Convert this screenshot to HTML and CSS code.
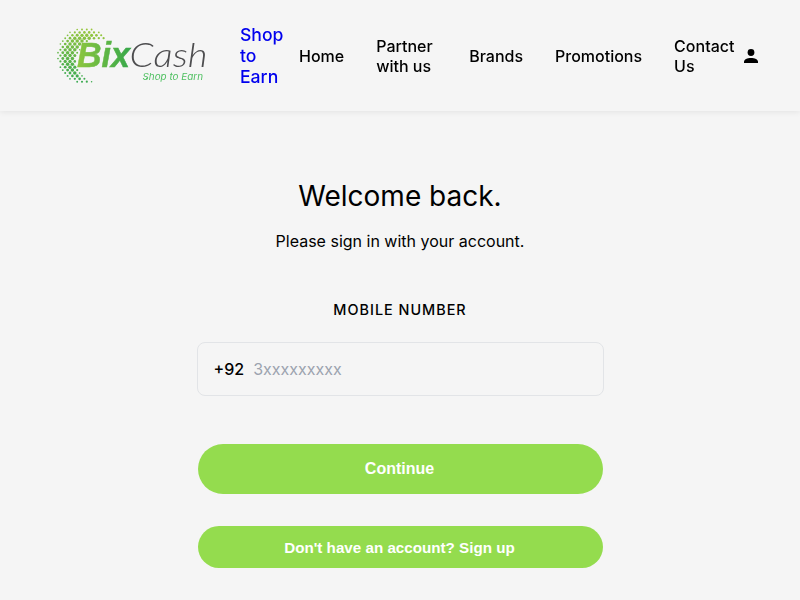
FILE: index.html
```html
<!DOCTYPE html>
<html lang="en">
<head>
<meta charset="utf-8">
<title>BixCash</title>
<link rel="stylesheet" href="styles.css">
</head>
<body>
<header class="header">
  <a class="logo" href="#">
    <svg width="160" height="64" viewBox="52 24 160 64" role="img" aria-label="BixCash">
      <defs>
        <linearGradient id="globe" gradientUnits="userSpaceOnUse" x1="90" y1="28" x2="76" y2="84">
          <stop offset="0" stop-color="#9bc83c"/>
          <stop offset="1" stop-color="#35a853"/>
        </linearGradient>
        <linearGradient id="bix" gradientUnits="userSpaceOnUse" x1="78" y1="0" x2="130" y2="0">
          <stop offset="0" stop-color="#8cc63f"/>
          <stop offset="1" stop-color="#37a84a"/>
        </linearGradient>
      </defs>
      <g id="dots" fill="url(#globe)"></g>
      <text class="logo-bix" x="77" y="67" textLength="53" lengthAdjust="spacingAndGlyphs" fill="url(#bix)" stroke="url(#bix)">Bix</text>
      <text class="logo-cash" x="129.500" y="67" textLength="78" lengthAdjust="spacingAndGlyphs">Cash</text>
      <text class="logo-tag" x="142.500" y="79.500" textLength="60.500" lengthAdjust="spacingAndGlyphs">Shop to Earn</text>
    </svg>
  </a>
  <a class="tagline" href="#">Shop to Earn</a>
  <nav class="nav">
    <a href="#">Home</a>
    <a class="partner" href="#">Partner<br>with us</a>
    <a href="#">Brands</a>
    <a href="#">Promotions</a>
    <a href="#">Contact<br>Us</a>
  </nav>
  <svg class="user" width="14" height="14" viewBox="0 0 14 14"><circle cx="7" cy="3.500" r="3.400"/><path d="M0 14v-1.200C0 10.200 3.200 8.900 7 8.900s7 1.300 7 3.900V14z"/></svg>
</header>
<main class="main">
  <h1 class="title">Welcome back.</h1>
  <p class="subtitle">Please sign in with your account.</p>
  <form class="form">
    <label class="label" for="mobile">MOBILE NUMBER</label>
    <div class="field"><span>+92</span><input id="mobile" type="text" placeholder="3xxxxxxxxx"></div>
    <button class="btn" type="button">Continue</button>
    <button class="btn btn-small" type="button">Don't have an account? Sign up</button>
  </form>
</main>
<script src="logo.js"></script>
</body>
</html>
```

FILE: styles.css
```css
* { box-sizing: border-box; }
body {
  margin: 0;
  background: #f5f5f5;
  color: #000;
  font-family: Inter, "Liberation Sans", sans-serif;
  font-size: 16px;
}
.header {
  display: flex;
  align-items: center;
  height: 111px;
  padding-left: 52px;
  background: #f5f5f5;
  box-shadow: 0 1px 6px rgba(0, 0, 0, .08);
  will-change: transform;
}
.logo { display: block; width: 160px; height: 64px; }
.logo svg { display: block; }
.logo-bix { font: italic 700 35px "Liberation Sans", sans-serif; stroke-width: .5px; }
.logo-cash { font: italic 300 34px Lato, sans-serif; fill: #4d4d4f; }
.logo-tag { font: italic 400 9.5px Inter, sans-serif; fill: #4fc061; }
.tagline {
  width: 43px;
  margin-left: 28px;
  color: #00e;
  font-size: 17.6px;
  line-height: 21px;
  font-weight: 500;
  text-decoration: none;
}
.nav { display: flex; align-items: center; gap: 32px; margin-left: 16px; }
.nav a { color: #000; font-weight: 500; line-height: 20px; text-decoration: none; white-space: nowrap; }
.nav .partner { width: 61px; }
.user { margin-left: 10px; flex: none; }
.main { width: 406px; margin: 0 auto; text-align: center; }
.title { margin: 66px 0 0; font-size: 28px; line-height: 38px; font-weight: 400; }
.subtitle { margin: 14px 0 0; line-height: 24px; }
.form { display: flex; flex-direction: column; margin-top: 47px; }
.label { font-size: 14.4px; line-height: 20px; font-weight: 500; letter-spacing: 1px; }
.field {
  display: flex;
  align-items: center;
  height: 54px;
  margin: 22px -1px 0 0;
  padding: 0 16px;
  border: 1px solid #e2e4e7;
  border-radius: 8px;
  font-weight: 500;
}
.field span { margin-left: -.5px; }
.field input {
  flex: 1;
  min-width: 0;
  margin-left: 9px;
  padding: 0;
  border: 0;
  outline: 0;
  background: transparent;
  font: 400 16px Inter, sans-serif;
}
.field input::placeholder { color: #9ca3af; }
.btn {
  height: 50px;
  margin: 48px 0 0 1px;
  padding: 0 2px 0 0;
  border: 0;
  border-radius: 25px;
  background: #94dc4e;
  color: #fff;
  font: 700 16px "Liberation Sans", sans-serif;
}
.btn-small { height: 42px; margin-top: 32px; font-size: 15.2px; }
```

FILE: logo.js
```js
// Halftone crescent: dots shrink towards the rim and the inner edge.
const group = document.getElementById('dots');
for (let row = 0; row < 20; row++) {
  for (let col = 0; col < 13; col++) {
    const x = 58 + col * 4.8 + (row % 2) * 2.4;
    const y = 29.5 + row * 2.9;
    const rim = 28.5 - Math.hypot(x - 85.5, y - 56);
    const inner = Math.hypot(x - 98, y - 61) - 21.5;
    if (rim < 0 || inner < 0) continue;
    const c = document.createElementNS('http://www.w3.org/2000/svg', 'circle');
    c.setAttribute('cx', x);
    c.setAttribute('cy', y);
    c.setAttribute('r', Math.min(1.75, 0.75 + rim * 0.12, 0.7 + inner * 0.35));
    group.appendChild(c);
  }
}
```
